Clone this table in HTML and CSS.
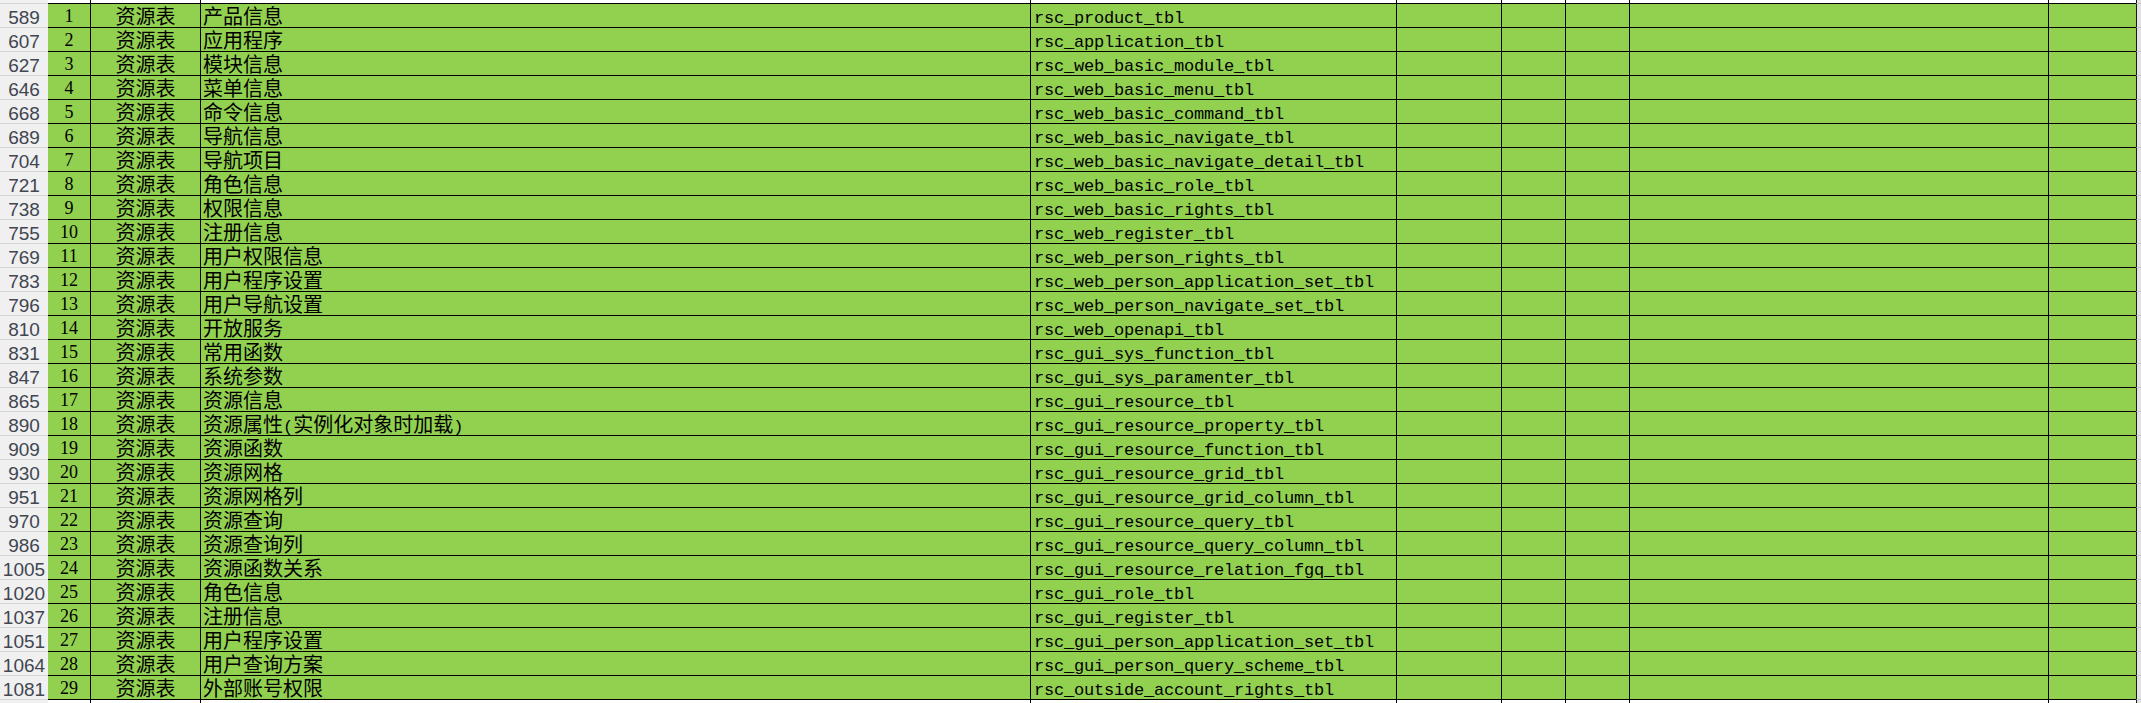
FILE: index.html
```html
<!DOCTYPE html>
<html lang="zh-CN">
<head>
<meta charset="utf-8">
<title>资源表</title>
<link rel="stylesheet" href="styles.css">
</head>
<body>
<div class="sheet">
  <div class="row strip-top"><div class="rh"></div><div class="c num"></div><div class="c"></div><div class="c"></div><div class="c"></div><div class="c"></div><div class="c"></div><div class="c"></div><div class="c"></div><div class="c"></div><div class="edge"></div></div>

  <div class="row"><div class="rh">589</div><div class="c num">1</div><div class="c type">资源表</div><div class="c name">产品信息</div><div class="c code">rsc_product_tbl</div><div class="c"></div><div class="c"></div><div class="c"></div><div class="c"></div><div class="c"></div><div class="edge"></div></div>
  <div class="row"><div class="rh">607</div><div class="c num">2</div><div class="c type">资源表</div><div class="c name">应用程序</div><div class="c code">rsc_application_tbl</div><div class="c"></div><div class="c"></div><div class="c"></div><div class="c"></div><div class="c"></div><div class="edge"></div></div>
  <div class="row"><div class="rh">627</div><div class="c num">3</div><div class="c type">资源表</div><div class="c name">模块信息</div><div class="c code">rsc_web_basic_module_tbl</div><div class="c"></div><div class="c"></div><div class="c"></div><div class="c"></div><div class="c"></div><div class="edge"></div></div>
  <div class="row"><div class="rh">646</div><div class="c num">4</div><div class="c type">资源表</div><div class="c name">菜单信息</div><div class="c code">rsc_web_basic_menu_tbl</div><div class="c"></div><div class="c"></div><div class="c"></div><div class="c"></div><div class="c"></div><div class="edge"></div></div>
  <div class="row"><div class="rh">668</div><div class="c num">5</div><div class="c type">资源表</div><div class="c name">命令信息</div><div class="c code">rsc_web_basic_command_tbl</div><div class="c"></div><div class="c"></div><div class="c"></div><div class="c"></div><div class="c"></div><div class="edge"></div></div>
  <div class="row"><div class="rh">689</div><div class="c num">6</div><div class="c type">资源表</div><div class="c name">导航信息</div><div class="c code">rsc_web_basic_navigate_tbl</div><div class="c"></div><div class="c"></div><div class="c"></div><div class="c"></div><div class="c"></div><div class="edge"></div></div>
  <div class="row"><div class="rh">704</div><div class="c num">7</div><div class="c type">资源表</div><div class="c name">导航项目</div><div class="c code">rsc_web_basic_navigate_detail_tbl</div><div class="c"></div><div class="c"></div><div class="c"></div><div class="c"></div><div class="c"></div><div class="edge"></div></div>
  <div class="row"><div class="rh">721</div><div class="c num">8</div><div class="c type">资源表</div><div class="c name">角色信息</div><div class="c code">rsc_web_basic_role_tbl</div><div class="c"></div><div class="c"></div><div class="c"></div><div class="c"></div><div class="c"></div><div class="edge"></div></div>
  <div class="row"><div class="rh">738</div><div class="c num">9</div><div class="c type">资源表</div><div class="c name">权限信息</div><div class="c code">rsc_web_basic_rights_tbl</div><div class="c"></div><div class="c"></div><div class="c"></div><div class="c"></div><div class="c"></div><div class="edge"></div></div>
  <div class="row"><div class="rh">755</div><div class="c num">10</div><div class="c type">资源表</div><div class="c name">注册信息</div><div class="c code">rsc_web_register_tbl</div><div class="c"></div><div class="c"></div><div class="c"></div><div class="c"></div><div class="c"></div><div class="edge"></div></div>
  <div class="row"><div class="rh">769</div><div class="c num">11</div><div class="c type">资源表</div><div class="c name">用户权限信息</div><div class="c code">rsc_web_person_rights_tbl</div><div class="c"></div><div class="c"></div><div class="c"></div><div class="c"></div><div class="c"></div><div class="edge"></div></div>
  <div class="row"><div class="rh">783</div><div class="c num">12</div><div class="c type">资源表</div><div class="c name">用户程序设置</div><div class="c code">rsc_web_person_application_set_tbl</div><div class="c"></div><div class="c"></div><div class="c"></div><div class="c"></div><div class="c"></div><div class="edge"></div></div>
  <div class="row"><div class="rh">796</div><div class="c num">13</div><div class="c type">资源表</div><div class="c name">用户导航设置</div><div class="c code">rsc_web_person_navigate_set_tbl</div><div class="c"></div><div class="c"></div><div class="c"></div><div class="c"></div><div class="c"></div><div class="edge"></div></div>
  <div class="row"><div class="rh">810</div><div class="c num">14</div><div class="c type">资源表</div><div class="c name">开放服务</div><div class="c code">rsc_web_openapi_tbl</div><div class="c"></div><div class="c"></div><div class="c"></div><div class="c"></div><div class="c"></div><div class="edge"></div></div>
  <div class="row"><div class="rh">831</div><div class="c num">15</div><div class="c type">资源表</div><div class="c name">常用函数</div><div class="c code">rsc_gui_sys_function_tbl</div><div class="c"></div><div class="c"></div><div class="c"></div><div class="c"></div><div class="c"></div><div class="edge"></div></div>
  <div class="row"><div class="rh">847</div><div class="c num">16</div><div class="c type">资源表</div><div class="c name">系统参数</div><div class="c code">rsc_gui_sys_paramenter_tbl</div><div class="c"></div><div class="c"></div><div class="c"></div><div class="c"></div><div class="c"></div><div class="edge"></div></div>
  <div class="row"><div class="rh">865</div><div class="c num">17</div><div class="c type">资源表</div><div class="c name">资源信息</div><div class="c code">rsc_gui_resource_tbl</div><div class="c"></div><div class="c"></div><div class="c"></div><div class="c"></div><div class="c"></div><div class="edge"></div></div>
  <div class="row"><div class="rh">890</div><div class="c num">18</div><div class="c type">资源表</div><div class="c name">资源属性<span class="half">(</span>实例化对象时加载<span class="half">)</span></div><div class="c code">rsc_gui_resource_property_tbl</div><div class="c"></div><div class="c"></div><div class="c"></div><div class="c"></div><div class="c"></div><div class="edge"></div></div>
  <div class="row"><div class="rh">909</div><div class="c num">19</div><div class="c type">资源表</div><div class="c name">资源函数</div><div class="c code">rsc_gui_resource_function_tbl</div><div class="c"></div><div class="c"></div><div class="c"></div><div class="c"></div><div class="c"></div><div class="edge"></div></div>
  <div class="row"><div class="rh">930</div><div class="c num">20</div><div class="c type">资源表</div><div class="c name">资源网格</div><div class="c code">rsc_gui_resource_grid_tbl</div><div class="c"></div><div class="c"></div><div class="c"></div><div class="c"></div><div class="c"></div><div class="edge"></div></div>
  <div class="row"><div class="rh">951</div><div class="c num">21</div><div class="c type">资源表</div><div class="c name">资源网格列</div><div class="c code">rsc_gui_resource_grid_column_tbl</div><div class="c"></div><div class="c"></div><div class="c"></div><div class="c"></div><div class="c"></div><div class="edge"></div></div>
  <div class="row"><div class="rh">970</div><div class="c num">22</div><div class="c type">资源表</div><div class="c name">资源查询</div><div class="c code">rsc_gui_resource_query_tbl</div><div class="c"></div><div class="c"></div><div class="c"></div><div class="c"></div><div class="c"></div><div class="edge"></div></div>
  <div class="row"><div class="rh">986</div><div class="c num">23</div><div class="c type">资源表</div><div class="c name">资源查询列</div><div class="c code">rsc_gui_resource_query_column_tbl</div><div class="c"></div><div class="c"></div><div class="c"></div><div class="c"></div><div class="c"></div><div class="edge"></div></div>
  <div class="row"><div class="rh">1005</div><div class="c num">24</div><div class="c type">资源表</div><div class="c name">资源函数关系</div><div class="c code">rsc_gui_resource_relation_fgq_tbl</div><div class="c"></div><div class="c"></div><div class="c"></div><div class="c"></div><div class="c"></div><div class="edge"></div></div>
  <div class="row"><div class="rh">1020</div><div class="c num">25</div><div class="c type">资源表</div><div class="c name">角色信息</div><div class="c code">rsc_gui_role_tbl</div><div class="c"></div><div class="c"></div><div class="c"></div><div class="c"></div><div class="c"></div><div class="edge"></div></div>
  <div class="row"><div class="rh">1037</div><div class="c num">26</div><div class="c type">资源表</div><div class="c name">注册信息</div><div class="c code">rsc_gui_register_tbl</div><div class="c"></div><div class="c"></div><div class="c"></div><div class="c"></div><div class="c"></div><div class="edge"></div></div>
  <div class="row"><div class="rh">1051</div><div class="c num">27</div><div class="c type">资源表</div><div class="c name">用户程序设置</div><div class="c code">rsc_gui_person_application_set_tbl</div><div class="c"></div><div class="c"></div><div class="c"></div><div class="c"></div><div class="c"></div><div class="edge"></div></div>
  <div class="row"><div class="rh">1064</div><div class="c num">28</div><div class="c type">资源表</div><div class="c name">用户查询方案</div><div class="c code">rsc_gui_person_query_scheme_tbl</div><div class="c"></div><div class="c"></div><div class="c"></div><div class="c"></div><div class="c"></div><div class="edge"></div></div>
  <div class="row"><div class="rh">1081</div><div class="c num">29</div><div class="c type">资源表</div><div class="c name">外部账号权限</div><div class="c code">rsc_outside_account_rights_tbl</div><div class="c"></div><div class="c"></div><div class="c"></div><div class="c"></div><div class="c"></div><div class="edge"></div></div>

  <div class="row strip-bottom"><div class="rh"></div><div class="c num"></div><div class="c"></div><div class="c"></div><div class="c"></div><div class="c"></div><div class="c"></div><div class="c"></div><div class="c"></div><div class="c"></div><div class="edge"></div></div>
</div>
</body>
</html>
```

FILE: styles.css
```css
html, body {
  margin: 0;
  padding: 0;
  background: #ffffff;
}

body {
  width: 2141px;
  height: 703px;
  overflow: hidden;
  color: #000000;
}

.sheet {
  display: flex;
  flex-direction: column;
}

.row {
  display: grid;
  grid-template-columns: 48px 42px 110px 830px 366px 105px 64px 64px 419px 88px 5px;
  height: 24px;
}

.rh {
  box-sizing: border-box;
  background: #f0f0f0;
  border-top: 1px solid #d4d4d4;
  color: #414651;
  font-family: "Liberation Sans", Arial, sans-serif;
  font-size: 19px;
  line-height: 19px;
  padding-top: 4px;
  text-align: center;
  white-space: nowrap;
}

.c {
  box-sizing: border-box;
  background: #92d050;
  border-top: 1px solid #000000;
  border-left: 1px solid #000000;
  white-space: nowrap;
}

.c.num {
  border-left: none;
  text-align: center;
  font-family: "Liberation Serif", "Times New Roman", serif;
  font-size: 18px;
  line-height: 22px;
  padding-top: 1px;
}

.type, .name {
  font-family: "Noto Sans CJK SC", "Noto Sans CJK JP", sans-serif;
  font-size: 20px;
  line-height: 23px;
}

.type {
  text-align: center;
}

.name {
  padding-left: 2px;
}

.half {
  font-family: "Liberation Mono", monospace;
  font-size: 17px;
}

.code {
  font-family: "Liberation Mono", "Courier New", monospace;
  font-size: 17px;
  letter-spacing: -0.2px;
  line-height: 17px;
  padding-top: 6px;
  padding-left: 3px;
}

.edge {
  box-sizing: border-box;
  background: #e3e3e3;
  border-left: 1px solid #1a1a1a;
  border-top: 1px solid #c9c9c9;
}

.strip-top {
  height: 3px;
}

.strip-top .rh,
.strip-top .c,
.strip-top .edge {
  border-top: none;
}

.strip-top .c,
.strip-bottom .c {
  background: #ffffff;
}

.strip-bottom {
  height: 4px;
}
```
